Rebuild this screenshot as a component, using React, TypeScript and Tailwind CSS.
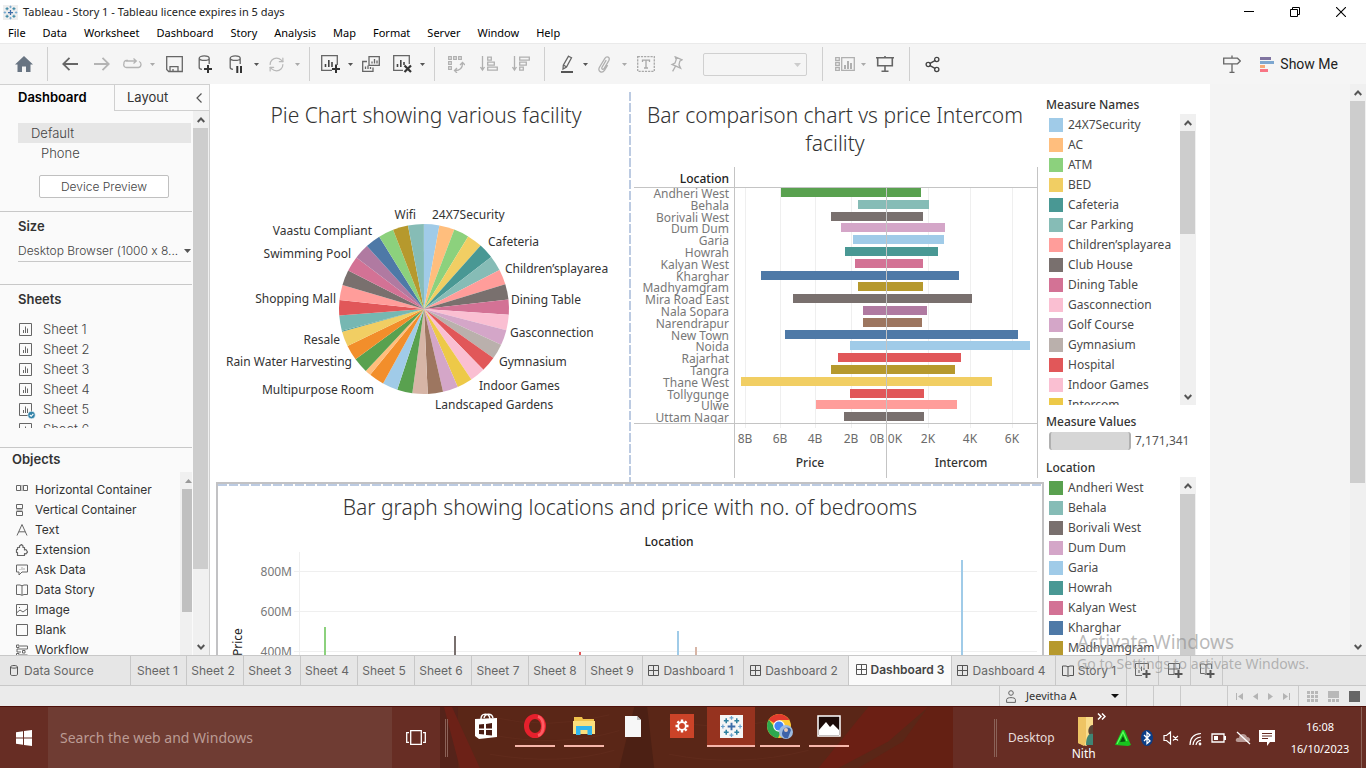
import React from "react";
import { RefreshCw, Share2 } from "lucide-react";

type Item = { name: string; color: string };

const measures: Item[] = [
  { name: "24X7Security", color: "#a0cbe8" },
  { name: "AC", color: "#ffbe7d" },
  { name: "ATM", color: "#8cd17d" },
  { name: "BED", color: "#f1ce63" },
  { name: "Cafeteria", color: "#499894" },
  { name: "Car Parking", color: "#86bcb6" },
  { name: "Children’splayarea", color: "#ff9d9a" },
  { name: "Club House", color: "#79706e" },
  { name: "Dining Table", color: "#d37295" },
  { name: "Gasconnection", color: "#fabfd2" },
  { name: "Golf Course", color: "#d4a6c8" },
  { name: "Gymnasium", color: "#bab0ac" },
  { name: "Hospital", color: "#e15759" },
  { name: "Indoor Games", color: "#fabfd2" },
  { name: "Intercom", color: "#edc948" },
];

type Loc = Item & { price: number; intercom: number };

/* price in billions, intercom in thousands */
const locations: Loc[] = [
  { name: "Andheri West", color: "#59a14f", price: 5.98, intercom: 1.65 },
  { name: "Behala", color: "#86bcb6", price: 1.62, intercom: 2.03 },
  { name: "Borivali West", color: "#79706e", price: 3.2, intercom: 1.75 },
  { name: "Dum Dum", color: "#d4a6c8", price: 2.63, intercom: 2.8 },
  { name: "Garia", color: "#a0cbe8", price: 1.95, intercom: 2.75 },
  { name: "Howrah", color: "#499894", price: 2.4, intercom: 2.47 },
  { name: "Kalyan West", color: "#d37295", price: 1.84, intercom: 1.75 },
  { name: "Kharghar", color: "#4e79a7", price: 7.12, intercom: 3.46 },
  { name: "Madhyamgram", color: "#b6992d", price: 1.67, intercom: 1.75 },
  { name: "Mira Road East", color: "#79706e", price: 5.35, intercom: 4.08 },
  { name: "Nala Sopara", color: "#b07aa1", price: 1.38, intercom: 1.94 },
  { name: "Narendrapur", color: "#9d7660", price: 1.38, intercom: 1.7 },
  { name: "New Town", color: "#4e79a7", price: 5.76, intercom: 6.27 },
  { name: "Noida", color: "#a0cbe8", price: 2.07, intercom: 6.84 },
  { name: "Rajarhat", color: "#e15759", price: 2.8, intercom: 3.56 },
  { name: "Tangra", color: "#b6992d", price: 3.15, intercom: 3.27 },
  { name: "Thane West", color: "#f1ce63", price: 8.25, intercom: 5.03 },
  { name: "Tollygunge", color: "#e15759", price: 2.07, intercom: 1.79 },
  { name: "Ulwe", color: "#ff9d9a", price: 4.0, intercom: 3.37 },
  { name: "Uttam Nagar", color: "#79706e", price: 2.46, intercom: 1.79 },
];

const slices: [string, number][] = [
  ["#a0cbe8", 10.44], ["#ffbe7d", 10.44], ["#8cd17d", 10.44], ["#f1ce63", 10.44],
  ["#499894", 10.44], ["#86bcb6", 10.44], ["#ff9d9a", 10.44], ["#79706e", 10.44],
  ["#d37295", 10.44], ["#fabfd2", 10.44], ["#d4a6c8", 10.44], ["#bab0ac", 10.44],
  ["#e15759", 10.44], ["#fabfd2", 10.44], ["#edc948", 10.44], ["#d4a6c8", 10.44],
  ["#9d7660", 10.44], ["#d7b5a6", 10.44], ["#59a14f", 10.44], ["#a0cbe8", 10.44],
  ["#f28e2b", 10.44], ["#ffbe7d", 4], ["#59a14f", 10.44], ["#f28e2b", 10.44],
  ["#f1ce63", 10.44], ["#499894", 0.6], ["#76b7b2", 10.44], ["#e15759", 10.44],
  ["#ff9d9a", 10.44], ["#79706e", 10.44], ["#d37295", 10.44], ["#b07aa1", 10.44],
  ["#4e79a7", 10.44], ["#8cd17d", 10.44], ["#b6992d", 10.44], ["#86bcb6", 10.8],
];

const pieLabels: [string, number, number, "start" | "end"][] = [
  ["24X7Security", 216, 127, "start"],
  ["Cafeteria", 272, 154, "start"],
  ["Children’splayarea", 289, 181, "start"],
  ["Dining Table", 295, 212, "start"],
  ["Gasconnection", 294, 245, "start"],
  ["Gymnasium", 283, 274, "start"],
  ["Indoor Games", 263, 298, "start"],
  ["Landscaped Gardens", 219, 317, "start"],
  ["Multipurpose Room", 158, 302, "end"],
  ["Rain Water Harvesting", 136, 274, "end"],
  ["Resale", 124, 252, "end"],
  ["Shopping Mall", 120, 211, "end"],
  ["Swimming Pool", 135, 166, "end"],
  ["Vaastu Compliant", 156, 143, "end"],
  ["Wifi", 200, 127, "end"],
];

function PieChart() {
  const cx = 208;
  const cy = 217;
  const r = 85;
  let a = 0;
  const point = (deg: number) => {
    const t = (deg * Math.PI) / 180;
    return `${(cx + r * Math.sin(t)).toFixed(2)} ${(cy - r * Math.cos(t)).toFixed(2)}`;
  };
  return (
    <svg viewBox="0 0 413 390" width="413" height="390" className="block font-['Noto_Sans',sans-serif] text-xs" role="img" aria-label="Pie chart">
      {slices.map(([color, deg], i) => {
        const start = a;
        a += deg;
        return <path key={i} fill={color} d={`M${cx} ${cy}L${point(start)}A${r} ${r} 0 0 1 ${point(Math.min(a, 360))}Z`} />;
      })}
      {pieLabels.map(([label, x, y, anchor]) => (
        <text key={label} x={x} y={y} textAnchor={anchor} fill="#333">
          {label}
        </text>
      ))}
    </svg>
  );
}

function CompareChart() {
  const zero = 252;
  return (
    <svg viewBox="0 0 410 316" width="410" height="316" className="block font-['Noto_Sans',sans-serif] text-xs" role="img" aria-label="Price and intercom by location">
      <g shapeRendering="crispEdges">
        {[111, 146, 181, 217, 294, 336, 378].map((x) => (
          <rect key={x} x={x} y={21} width={1} height={240} fill="#efefef" />
        ))}
        {locations.map((l, i) => {
          const y = 21 + Math.round(i * 11.8);
          const w = Math.round(l.price * 17.65) - 1;
          const v = Math.round(l.intercom * 21);
          return <rect key={l.name} x={zero - w} y={y} width={w + v} height={9} fill={l.color} />;
        })}
        <g fill="#c4c4c4">
          <rect x={0} y={20} width={404} height={1} />
          <rect x={0} y={256} width={404} height={1} />
          <rect x={100} y={0} width={1} height={311} />
          <rect x={403} y={0} width={1} height={311} />
          <rect x={zero} y={21} width={1} height={290} />
        </g>
      </g>
      <text x={95} y={16} textAnchor="end" fontWeight={500} fill="#222">Location</text>
      <svg x={0} y={21} width={100} height={235}>
        {locations.map((l, i) => (
          <text key={l.name} x={95} y={Math.round(i * 11.8) + 10} textAnchor="end" fill="#787878">
            {l.name}
          </text>
        ))}
      </svg>
      <g fill="#6b6b6b" textAnchor="middle">
        {([["8B", 111], ["6B", 146], ["4B", 181], ["2B", 217], ["0B", 243], ["0K", 261], ["2K", 294], ["4K", 336], ["6K", 378]] as [string, number][]).map(([t, x]) => (
          <text key={t} x={x} y={276}>{t}</text>
        ))}
      </g>
      <g fill="#333" fontWeight={500} textAnchor="middle">
        <text x={176} y={300}>Price</text>
        <text x={327} y={300}>Intercom</text>
      </g>
    </svg>
  );
}

function BedroomChart() {
  const bars: [number, number, string][] = [
    [106, 75, "#8cd17d"], [236, 84, "#79706e"], [361, 100, "#e15759"],
    [459, 79, "#a0cbe8"], [477, 95, "#d7b5a6"], [743, 8, "#a0cbe8"],
  ];
  return (
    <svg viewBox="0 0 824 180" width="824" height="180" className="block font-['Noto_Sans',sans-serif] text-xs" role="img" aria-label="Price by location and bedrooms">
      <g shapeRendering="crispEdges">
        {[19, 59, 99].map((y) => (
          <rect key={y} x={76} y={y} width={743} height={1} fill="#efefef" />
        ))}
        <rect x={81} y={0} width={1} height={180} fill="#efefef" />
        {bars.map(([x, y, c]) => (
          <rect key={x} x={x} y={y} width={2} height={180 - y} fill={c} />
        ))}
      </g>
      <g fill="#787878" textAnchor="end">
        <text x={74} y={24}>800M</text>
        <text x={74} y={64}>600M</text>
        <text x={74} y={104}>400M</text>
      </g>
      <text transform="translate(24 104) rotate(-90)" fill="#222">Price</text>
    </svg>
  );
}

function Chevron({ up }: { up?: boolean }) {
  return (
    <svg width="8" height="6" viewBox="0 0 8 6" aria-hidden="true">
      <path d={up ? "M0.7 5L4 1.5L7.3 5" : "M0.7 1L4 4.5L7.3 1"} fill="none" stroke="#555" strokeWidth="1.9" />
    </svg>
  );
}

function ScrollBar({ thumb, down = true }: { thumb: string; down?: boolean }) {
  return (
    <div className="flex w-4 shrink-0 flex-col items-stretch bg-[#f0f0f0]">
      <button aria-label="Scroll up" className="mr-px flex h-[17px] shrink-0 items-center justify-center">
        <Chevron up />
      </button>
      <div className={`mr-px bg-[#cdcdcd] ${thumb}`} />
      {down && (
        <button aria-label="Scroll down" className="mt-auto mr-px flex h-[17px] shrink-0 items-center justify-center">
          <Chevron />
        </button>
      )}
    </div>
  );
}

function Legend({ title, items, className, thumb, down }: { title: string; items: Item[]; className: string; thumb: string; down?: boolean }) {
  return (
    <section className={`flex flex-col ${className}`}>
      <h3 className="h-[18px] shrink-0 text-xs leading-[18px] font-medium text-[#333]">{title}</h3>
      <div className="flex min-h-0 flex-1 overflow-hidden">
        <ul className="flex-1 overflow-hidden pt-px pl-[3px]">
          {items.map((m) => (
            <li key={m.name} className="flex h-5 items-center gap-[5px] text-xs whitespace-nowrap text-[#4a4a4a]">
              <span className="size-3.5 shrink-0" style={{ backgroundColor: m.color }} />
              {m.name}
            </li>
          ))}
        </ul>
        <ScrollBar thumb={thumb} down={down} />
      </div>
    </section>
  );
}

function Tool({ label, className, children }: { label: string; className: string; children: React.ReactNode }) {
  return (
    <button aria-label={label} className={`flex h-8 w-6 shrink-0 items-center justify-center text-[#666] ${className}`}>
      {children}
    </button>
  );
}

function Caret({ className, dim }: { className: string; dim?: boolean }) {
  return (
    <button aria-label="More options" className={`flex h-8 w-3 shrink-0 items-center justify-center ${className}`}>
      <svg width="5" height="3" viewBox="0 0 5 3"><path d="M0 0H5L2.5 3Z" fill={dim ? "#aaa" : "#555"} /></svg>
    </button>
  );
}

function Sep({ className }: { className: string }) {
  return <span className={`h-[34px] w-px shrink-0 bg-[#cfcfcf] ${className}`} />;
}

const line = { fill: "none", stroke: "currentColor", strokeWidth: 1.3 } as const;

function Toolbar() {
  return (
    <div className="flex h-[41px] shrink-0 items-center border-t border-[#eaeaea] bg-[#f5f5f5]">
      <Tool label="Home" className="ml-3">
        <svg width="18" height="16" viewBox="0 0 18 16"><path d="M9 0L18 8.5H15.5V16H11V10.5H7V16H2.5V8.5H0Z" fill="#687482" /></svg>
      </Tool>
      <Sep className="ml-[11px]" />
      <Tool label="Undo" className="ml-[10px]"><svg width="16" height="14" viewBox="0 0 16 14"><path d="M16 7H1M7.5 0.8L1.2 7L7.5 13.2" {...line} strokeWidth="1.8" /></svg></Tool>
      <Tool label="Redo" className="ml-2"><svg width="16" height="14" viewBox="0 0 16 14" className="text-[#b4b4b4]"><path d="M0 7H15M8.5 0.8L14.8 7L8.5 13.2" {...line} strokeWidth="1.8" /></svg></Tool>
      <Tool label="Replay animation" className="ml-1.5">
        <svg width="19" height="12" viewBox="0 0 19 12" className="text-[#b4b4b4]"><path d="M5 2.5H3.5A2.5 2.5 0 0 0 1 5.5A2.8 2.8 0 0 0 3.8 9.5H15.5A3 3 0 0 0 18 6.5A3 3 0 0 0 16 3.5M3 3H13M10.5 0.5L13.3 3L10.5 5.5" {...line} /></svg>
      </Tool>
      <Caret className="ml-0.5" dim />
      <Tool label="Save" className="ml-1">
        <svg width="17" height="17" viewBox="0 0 17 17"><path d="M0.7 0.7H16.3V15.5H2.7L0.7 13.5ZM4 15V10.7H12V15M7 15V13" {...line} /></svg>
      </Tool>
      <Tool label="New data source" className="ml-[7px]">
        <svg width="16" height="18" viewBox="0 0 16 18"><path d="M2.2 3.2V12.5C2.2 13.6 3 14.2 5 14.4M12.2 3.2V9M2.2 3.2C2.2 0.2 12.2 0.2 12.2 3.2C12.2 6.2 2.2 6.2 2.2 3.2" {...line} /><path d="M11 10V18M7 14H15" stroke="#333" strokeWidth="2" /></svg>
      </Tool>
      <Tool label="Pause auto updates" className="ml-[7px]">
        <svg width="16" height="18" viewBox="0 0 16 18"><path d="M2.2 3.2V12.5C2.2 13.6 3 14.2 5 14.4M12.2 3.2V9M2.2 3.2C2.2 0.2 12.2 0.2 12.2 3.2C12.2 6.2 2.2 6.2 2.2 3.2" {...line} /><path d="M9.3 11V18M13 11V18" stroke="#333" strokeWidth="2" /></svg>
      </Tool>
      <Caret className="ml-0.5" />
      <Tool label="Run update" className="ml-0.5"><RefreshCw className="size-[17px] text-[#b8b8b8]" strokeWidth={1.7} /></Tool>
      <Caret className="ml-[3px]" dim />
      <Sep className="ml-1.5" />
      <Tool label="New worksheet" className="ml-2">
        <svg width="19" height="18" viewBox="0 0 19 18"><path d="M16.3 10V0.7H0.7V15.3H11" {...line} /><path d="M4.5 12V9M7.8 12V5M11 12V7" stroke="#444" strokeWidth="1.6" /><path d="M15 9.5V18M11 14H19" stroke="#333" strokeWidth="2" /></svg>
      </Tool>
      <Caret className="ml-0.5" />
      <Tool label="Duplicate" className="ml-[3px]">
        <svg width="18" height="16" viewBox="0 0 18 16"><path d="M7 0.7H17.3V9.3H7ZM5 5.5H0.7V15.3H11V11.5M10 7.5V5.5M12.5 7.5V3M15 7.5V4.5M3.5 13V10.5M6 13V9.5M8.5 13V11" {...line} /></svg>
      </Tool>
      <Tool label="Clear sheet" className="ml-[7px]">
        <svg width="19" height="18" viewBox="0 0 19 18"><path d="M16.3 9V0.7H0.7V15.3H10" {...line} /><path d="M4.5 12V9M7.8 12V5M11 10V7" stroke="#444" strokeWidth="1.6" /><path d="M11.5 10.5L18 17M18 10.5L11.5 17" stroke="#333" strokeWidth="2.2" /></svg>
      </Tool>
      <Caret className="ml-0.5" />
      <Sep className="ml-1.5" />
      <Tool label="Swap rows and columns" className="ml-[9px]">
        <svg width="17" height="17" viewBox="0 0 17 17" className="text-[#b0b0b0]"><path d="M0.7 0.7H3.3V3.3H0.7ZM5.7 0.7H8.3V3.3H5.7ZM10.7 0.7H13.3V3.3H10.7ZM0.7 5.7H3.3V8.3H0.7ZM0.7 10.7H3.3V13.3H0.7ZM7 14.5C12 14.5 14.5 12 14.5 7.5M12 9L14.5 6.5L17 9M9 12L6.5 14.5L9 17" {...line} /></svg>
      </Tool>
      <Tool label="Sort ascending" className="ml-[9px]">
        <svg width="18" height="16" viewBox="0 0 18 16" className="text-[#b0b0b0]"><path d="M2.5 0V13M0.5 11L2.5 14L4.5 11M7.7 1.2H11.3V4.2H7.7ZM7.7 6.2H14.3V9.2H7.7ZM7.7 11.2H17.3V14.2H7.7Z" {...line} /></svg>
      </Tool>
      <Tool label="Sort descending" className="ml-2">
        <svg width="18" height="16" viewBox="0 0 18 16" className="text-[#b0b0b0]"><path d="M2.5 0V13M0.5 11L2.5 14L4.5 11M7.7 1.2H17.3V4.2H7.7ZM7.7 6.2H14.3V9.2H7.7ZM7.7 11.2H11.3V14.2H7.7Z" {...line} /></svg>
      </Tool>
      <Sep className="ml-[11px]" />
      <Tool label="Highlight" className="ml-2.5">
        <svg width="14" height="18" viewBox="0 0 14 18"><path d="M8.5 1.2L11.5 2.8L6.5 12L3 14L3.3 10.2ZM3.5 10L6.5 12" {...line} /><path d="M1 17H13" stroke="#555" strokeWidth="2" /></svg>
      </Tool>
      <Caret className="" />
      <Tool label="Group members" className="ml-px">
        <svg width="14" height="17" viewBox="0 0 14 17" className="text-[#b0b0b0]"><path d="M9.2 4.2L5 11.2C4 13.2 6.2 14 7.2 12.3L11.8 4.6C13.4 1.4 9.8 -0.6 7.9 2.4L2.6 11C0 15.4 5 18 7.6 14.2L10.6 9.2" {...line} /></svg>
      </Tool>
      <Caret className="ml-0.5" dim />
      <Tool label="Show mark labels" className="ml-1">
        <svg width="18" height="16" viewBox="0 0 18 16" className="text-[#a8a8a8]"><rect x="0.7" y="0.7" width="16.6" height="14.6" {...line} strokeDasharray="2.2 1" /><path d="M5.5 6V4.2H12.5V6M9 4.2V12M7 12H11" {...line} /></svg>
      </Tool>
      <Tool label="Fix axes" className="ml-1.5">
        <svg width="13" height="16" viewBox="0 0 13 16" className="text-[#b0b0b0]"><path d="M5.2 0.8L12.2 3.8L9.8 5.2L9 8.8L10.6 12.2L2 8.4L5 7L6.2 3.6ZM5.5 10.2L2.6 15.4" {...line} /></svg>
      </Tool>
      <div className="relative ml-[15px] h-[23px] w-[104px] shrink-0">
        <select aria-label="Fit" disabled className="h-full w-full appearance-none rounded-[2px] border border-[#d0d0d0] bg-[#f5f5f5]" />
        <svg width="7" height="4" viewBox="0 0 7 4" className="pointer-events-none absolute top-2.5 right-1.5"><path d="M0 0H7L3.5 4Z" fill="#ccc" /></svg>
      </div>
      <Sep className="ml-[15px]" />
      <Tool label="Show cards" className="ml-2.5">
        <svg width="20" height="14" viewBox="0 0 20 14" className="text-[#b0b0b0]"><path d="M0.7 0.7H4.3V3.3H0.7ZM0.7 5.5H4.3V8.3H0.7ZM0.7 10.5H4.3V13.3H0.7ZM6.7 0.7H19.3V13.3H6.7Z" {...line} /><path d="M10 12V8M13 12V4M16 12V6" stroke="currentColor" strokeWidth="2" /></svg>
      </Tool>
      <Caret className="" dim />
      <Tool label="Presentation mode" className="ml-1">
        <svg width="18" height="16" viewBox="0 0 18 16"><path d="M0 1.7H18M9 0V1M1.7 2V9.8H16.3V2M9 10V15M5.5 15.2H12.5" {...line} strokeWidth="1.6" /></svg>
      </Tool>
      <Sep className="ml-3" />
      <Tool label="Share" className="ml-2.5"><Share2 className="size-[17px] text-[#444]" strokeWidth={1.9} /></Tool>
      <Tool label="Data guide" className="ml-auto">
        <svg width="18" height="18" viewBox="0 0 18 18"><path d="M0.7 3.2H14.5L17.3 6L14.5 8.8H0.7ZM9 0.5V3M9 9V17M6.5 17.3H11.5" {...line} /></svg>
      </Tool>
      <button className="mr-[28px] ml-4 flex items-center gap-1.5 font-['Roboto',sans-serif] text-sm text-[#222]">
        <svg width="14" height="15" viewBox="0 0 14 15"><path d="M0 0H11V3H0Z" fill="#8074a0" /><path d="M0 4H14V7H0Z" fill="#7da7d0" /><path d="M0 8H5V11H0Z" fill="#f5a978" /><path d="M0 12H8V15H0Z" fill="#f87585" /></svg>
        Show Me
      </button>
    </div>
  );
}

function SheetIcon({ checked }: { checked?: boolean }) {
  return (
    <svg width="17" height="17" viewBox="0 0 17 17" className="shrink-0">
      <path d="M0.5 1.5H12.5V13.5H0.5ZM4.5 11V8M6.5 11V4.5M8.5 11V6.5" fill="none" stroke="#666" />
      {checked && (
        <g>
          <circle cx="12.5" cy="13" r="3.8" fill="#3182a8" stroke="#fff" strokeWidth="0.6" />
          <path d="M10.8 13L12.2 14.3L14.3 11.8" fill="none" stroke="#fff" strokeWidth="1.1" />
        </g>
      )}
    </svg>
  );
}

const objectIcons: { name: string; icon: React.ReactNode }[] = [
  { name: "Horizontal Container", icon: <><path d="M4.5 1.5H7.5V6.5H4.5Z" fill="#ccc" stroke="#bbb" /><path d="M0.5 1.5H4.5V6.5H0.5ZM7.5 1.5H11.5V6.5H7.5Z" /></> },
  { name: "Vertical Container", icon: <><path d="M1 5H6V7H1Z" fill="#bbb" stroke="#bbb" /><path d="M0.5 0.5H6.5V4.5H0.5ZM0.5 7.5H6.5V11.5H0.5Z" /></> },
  { name: "Text", icon: <path d="M1 11.5L6 0.5L11 11.5M2.8 7.8H9.2" /> },
  { name: "Extension", icon: <path d="M3.500 3.500H1.500V5.500H0.500V8.500H1.500V11.500H8.500V9.500L10 9.800L11.500 8L10 5.500L8.500 6V3.500H7V2L5.500 0.500L3.500 2Z" strokeWidth="1.200" strokeLinejoin="round" /> },
  { name: "Ask Data", icon: <><path d="M0.5 1H11.5V8H6L3 11V8H0.5Z" /><path d="M4 6V5M6 6V3M8 6V4" stroke="#aaa" /></> },
  { name: "Data Story", icon: <path d="M6 1.8L4 1H0.5V10.5H4L6 11.3L8 10.5H11.5V1H8ZM6 1.8V11" /> },
  { name: "Image", icon: <path d="M0.5 0.5H11.5V11.5H0.5ZM1 8.5L4 6L7 8L11 5M3.5 3V4" /> },
  { name: "Blank", icon: <path d="M0.5 0.5H11.5V11.5H0.5Z" /> },
  { name: "Workflow", icon: <path d="M0.5 1H3V3.5H0.5ZM4 2H11.5V5H1V8H5M6.5 6.5H9V9H6.5ZM0.5 9.5H3V12H0.5ZM4 11H11.5" /> },
];

function Sidebar() {
  return (
    <aside className="flex w-[210px] shrink-0 flex-col border-r border-[#d0d0d0] bg-[#fafafa] font-['Inter',sans-serif] text-[#444] [font-feature-settings:'calt'_0]">
      <div className="flex h-[27px] shrink-0 border-t border-[#d0d0d0]" role="tablist">
        <button role="tab" aria-selected="true" className="flex w-[114px] items-center pl-[18px] text-[13px] font-semibold text-black">Dashboard</button>
        <div className="flex flex-1 items-center justify-between border-b border-l border-[#d0d0d0] pr-[7px] pl-3">
          <button role="tab" aria-selected="false" className="text-[13px] text-[#333]">Layout</button>
          <button aria-label="Collapse pane"><svg width="6" height="10" viewBox="0 0 6 10"><path d="M5.5 0.5L1 5L5.5 9.5" fill="none" stroke="#555" strokeWidth="1.2" /></svg></button>
        </div>
      </div>
      <div className="flex min-h-0 flex-1">
        <div className="flex min-w-0 flex-1 flex-col pt-3">
          <div className="mr-px ml-[18px] h-5 bg-[#e6e6e6] pl-[13px] text-[13px] leading-5 font-light">Default</div>
          <div className="ml-[41px] h-5 text-[13px] leading-5 font-light">Phone</div>
          <button className="mt-3 ml-[39px] h-[23px] w-[130px] shrink-0 rounded-[2px] border border-[#c0c0c0] bg-white text-xs font-light">Device Preview</button>
          <div className="mt-[13px] border-t border-[#c8c8c8] px-[18px] pt-[5px]">
            <h2 className="text-[13px] leading-[18px] font-semibold text-[#333]">Size</h2>
          </div>
          <button aria-label="Dashboard size" className="mt-1.5 mr-px ml-[18px] flex h-[21px] shrink-0 items-center justify-between border-b border-[#c8c8c8] text-xs font-light whitespace-nowrap">
            <span>Desktop Browser (1000 x 8...</span>
            <svg width="7" height="4" viewBox="0 0 7 4"><path d="M0 0H7L3.5 4Z" fill="#555" /></svg>
          </button>
          <div className="mt-[22px] border-t border-[#c8c8c8] px-[18px] pt-[5px]">
            <h2 className="text-[13px] leading-[18px] font-semibold text-[#333]">Sheets</h2>
          </div>
          <ul className="mt-3 h-[108px] shrink-0 overflow-hidden pl-[19px]">
            {[1, 2, 3, 4, 5, 6].map((n) => (
              <li key={n} className="flex h-5 items-center gap-[7px] text-[13px] font-light">
                <SheetIcon checked={n === 5} />
                Sheet {n}
              </li>
            ))}
          </ul>
          <div className="mt-[19px] border-t border-[#c8c8c8] pt-[2px] pl-3">
            <h2 className="text-[13px] leading-[18px] font-semibold text-[#333]">Objects</h2>
          </div>
          <div className="mt-1 flex min-h-0 flex-1 overflow-hidden">
            <ul className="flex-1 pt-2 pl-4">
              {objectIcons.map((o) => (
                <li key={o.name} className="flex h-5 items-center gap-[7px] text-xs whitespace-nowrap text-[#333]">
                  <svg width="12" height="12" viewBox="0 0 12 12" fill="none" stroke="#666" className="shrink-0 overflow-visible">{o.icon}</svg>
                  {o.name}
                </li>
              ))}
            </ul>
            <div className="w-3 shrink-0 bg-[#f0f0f0]">
              <div className="flex h-[17px] items-center justify-center pl-1"><svg width="7" height="4" viewBox="0 0 7 4"><path d="M0 4H7L3.5 0Z" fill="#999" /></svg></div>
              <div className="ml-0.5 h-[123px] bg-[#c0c0c0]" />
            </div>
          </div>
        </div>
        <div className="ml-px flex">
          <ScrollBar thumb="h-[441px]" />
        </div>
      </div>
    </aside>
  );
}

function Canvas() {
  return (
    <main className="flex min-w-0 flex-1 bg-[#f4f4f4] font-['Noto_Sans',sans-serif]">
      <div className="min-w-0 flex-1 overflow-hidden">
        <div className="flex h-full w-[1000px] bg-white">
          <div className="flex w-[834px] flex-col pt-2 pl-1.5">
            <div className="flex h-[390px] shrink-0">
              <section className="relative w-[413px]">
                <h2 className="absolute inset-x-0 top-[9px] pl-[7px] text-center text-[21px] leading-7 font-light text-[#333]">Pie Chart showing various facility</h2>
                <PieChart />
              </section>
              <svg width="2" height="390" className="shrink-0"><path d="M1 0V390" stroke="#bccbe2" strokeWidth="2" strokeDasharray="9 2" /></svg>
              <section className="w-[413px] pt-[9px] pl-[3px]">
                <h2 className="pr-2 text-center text-[21px] leading-7 font-light text-[#333]">Bar comparison chart vs price Intercom facility</h2>
                <div className="mt-2.5"><CompareChart /></div>
              </section>
            </div>
            <section className="min-h-0 flex-1 border-2 border-b-0 border-[#c2c2c4]">
              <svg height="2" className="block w-full"><path d="M0 1H824" stroke="#bccbe2" strokeWidth="2" strokeDasharray="9 2" /></svg>
              <h2 className="mt-[7px] text-center text-[21px] leading-7 font-light text-[#333]">Bar graph showing locations and price with no. of bedrooms</h2>
              <p className="mt-3 pl-[78px] text-center text-xs leading-[18px] font-medium text-[#222]">Location</p>
              <div className="mt-px"><BedroomChart /></div>
            </section>
          </div>
          <div className="ml-[2px] flex w-[150px] flex-col pt-3">
            <Legend title="Measure Names" items={measures} className="h-[309px] shrink-0" thumb="h-[103px]" />
            <section className="mt-2 h-[46px] shrink-0">
              <h3 className="text-xs leading-[18px] font-medium text-[#333]">Measure Values</h3>
              <div className="flex items-center gap-1 pt-px pl-[3px]">
                <div className="h-[18px] w-[82px] rounded-[3px] border-x-2 border-[#b0b0b0] bg-[#d6d6d6]" />
                <span className="text-xs leading-[18px] text-[#555]">7,171,341</span>
              </div>
            </section>
            <Legend title="Location" items={locations.slice(0, 10)} className="min-h-0 flex-1" thumb="flex-1" down={false} />
          </div>
        </div>
      </div>
      <ScrollBar thumb="h-[382px]" />
    </main>
  );
}

function GridIcon() {
  return <svg width="11" height="11" viewBox="0 0 11 11" className="shrink-0"><path d="M0.5 0.5H10.5V10.5H0.5ZM5.5 0.5V10.5M0.5 5.5H10.5" fill="none" stroke="#555" /></svg>;
}
function BookIcon() {
  return <svg width="12" height="12" viewBox="0 0 12 12" className="shrink-0"><path d="M6 1.8L4 1H0.5V10.5H4L6 11.3L8 10.5H11.5V1H8ZM6 1.8V11" fill="none" stroke="#555" /></svg>;
}

function AddTab({ label, children }: { label: string; children: React.ReactNode }) {
  return (
    <button aria-label={label} className="flex w-8 items-center justify-center border-r border-[#c8c8c8]">
      <svg width="16" height="15" viewBox="0 0 16 15" fill="none" stroke="#666">{children}<path d="M11.5 7V15M7.5 11H15.5" stroke="#555" strokeWidth="2" /></svg>
    </button>
  );
}

function SheetTabs() {
  return (
    <nav className="flex h-[31px] shrink-0 border-y border-[#c8c8c8] bg-[#e6e6e6] font-['Inter',sans-serif] text-xs whitespace-nowrap text-[#666]">
      <button className="flex w-[131px] items-center gap-1.5 border-r border-[#c8c8c8] pl-2.5">
        <svg width="8" height="11" viewBox="0 0 8 11"><path d="M0.5 2V9.5C0.5 11 7.5 11 7.5 9.5V2C7.5 0 0.5 0 0.5 2C0.5 3.5 7.5 3.5 7.5 2" fill="none" stroke="#555" /></svg>
        Data Source
      </button>
      <button className="w-14 border-r border-[#c8c8c8] pr-0.5">Sheet 1</button>
      {[2, 3, 4, 5, 6, 7, 8, 9].map((n) => (
        <button key={n} className="w-[57px] border-r border-[#c8c8c8] pr-1">Sheet {n}</button>
      ))}
      <button className="flex w-[101px] items-center justify-center gap-1 border-r border-[#c8c8c8] pr-1"><GridIcon />Dashboard 1</button>
      <button className="flex w-[105px] items-center justify-center gap-1 border-r border-[#c8c8c8] pr-1"><GridIcon />Dashboard 2</button>
      <button aria-current="page" className="flex w-[103px] items-center justify-center gap-1 border-r border-[#c8c8c8] bg-[#fafafa] pb-0.5 font-semibold text-[#444]"><GridIcon />Dashboard 3</button>
      <button className="flex w-[104px] items-center justify-center gap-1 border-r border-[#c8c8c8] pr-1"><GridIcon />Dashboard 4</button>
      <button className="flex w-[71px] items-center justify-center gap-1 border-r border-[#c8c8c8] pr-1"><BookIcon />Story 1</button>
      <AddTab label="New worksheet"><path d="M13.5 6V0.5H0.5V12.5H7M4 10V7M6.5 8V3.5M9 7V5" /></AddTab>
      <AddTab label="New dashboard"><path d="M12.5 6V0.5H1.5V11.5H7M7 0.5V11.5M1.5 6H12.5" /></AddTab>
      <AddTab label="New story"><path d="M12.5 6V1H9L7 2L5 1H1.5V10.5H5L7 11.5V2" /></AddTab>
    </nav>
  );
}

function StatusBar() {
  return (
    <div className="flex h-5 shrink-0 justify-end bg-[#ebebeb] font-['Noto_Sans',sans-serif] text-[11px] text-[#333]">
      <button className="flex w-[128px] items-center border-x border-[#cacaca] pr-[7px] pl-1.5">
        <svg width="10" height="13" viewBox="0 0 10 13" fill="none" stroke="#666"><circle cx="5" cy="3" r="2.3" /><path d="M0.6 12.4V9.5C0.6 7 9.4 7 9.4 9.5V12.4Z" /></svg>
        <span className="ml-2.5">Jeevitha A</span>
        <svg width="8" height="4" viewBox="0 0 8 4" className="ml-auto"><path d="M0 0H8L4 4Z" fill="#111" /></svg>
      </button>
      <span className="w-[27px] border-r border-[#cacaca]" />
      <span className="w-[27px] border-r border-[#cacaca]" />
      <span className="w-[47px] border-r border-[#cacaca]" />
      <div className="flex w-[71px] items-center justify-between border-r border-[#cacaca] px-2">
        <button aria-label="First"><svg width="7" height="7" viewBox="0 0 7 7"><path d="M0 0H1V7H0ZM7 0V7L2 3.5Z" fill="#b4b4b4" /></svg></button>
        <button aria-label="Previous"><svg width="5" height="7" viewBox="0 0 5 7"><path d="M5 0V7L0 3.5Z" fill="#b4b4b4" /></svg></button>
        <button aria-label="Next"><svg width="5" height="7" viewBox="0 0 5 7"><path d="M0 0V7L5 3.5Z" fill="#b4b4b4" /></svg></button>
        <button aria-label="Last"><svg width="7" height="7" viewBox="0 0 7 7"><path d="M6 0H7V7H6ZM0 0V7L5 3.5Z" fill="#b4b4b4" /></svg></button>
      </div>
      <div className="flex w-[67px] items-center justify-between pr-1.5 pl-2">
        <button aria-label="Sheet sorter"><svg width="11" height="11" viewBox="0 0 11 11"><path d="M0 0H3V3H0ZM4 0H7V3H4ZM8 0H11V3H8ZM0 4H3V7H0ZM4 4H7V7H4ZM8 4H11V7H8ZM0 8H3V11H0ZM4 8H7V11H4ZM8 8H11V11H8Z" fill="#b8b8b8" /></svg></button>
        <button aria-label="Filmstrip"><svg width="11" height="11" viewBox="0 0 11 11"><path d="M0 0H11V7H0ZM0 8H3V11H0ZM4 8H7V11H4ZM8 8H11V11H8Z" fill="#b8b8b8" /></svg></button>
        <button aria-label="Tabs"><svg width="11" height="11" viewBox="0 0 11 11"><path d="M0 0H11V11H0Z" fill="#666" /></svg></button>
      </div>
    </div>
  );
}

function TableauMark() {
  return (
    <g fill="none" strokeWidth="1.6">
      <path d="M12 8V16M8 12H16" stroke="#3c6ca8" strokeWidth="2" />
      <path d="M6.5 3.5V8.5M4 6H9M17.5 3.5V8.5M15 6H20M6.5 15.5V20.5M4 18H9M17.5 15.5V20.5M15 18H20" stroke="#2d7f9e" />
      <path d="M12 1V5M10 3H14M12 19V23M10 21H14M3 10V14M1 12H5M21 10V14M19 12H23" stroke="#6aa2cc" strokeWidth="1.3" />
    </g>
  );
}

function TaskButton({ label, className, children }: { label: string; className?: string; children: React.ReactNode }) {
  return (
    <button aria-label={label} className={`flex h-10 w-10 shrink-0 items-center justify-center border-b-2 ${className ?? "border-transparent"}`}>
      {children}
    </button>
  );
}

function Taskbar() {
  return (
    <footer className="flex h-[62px] shrink-0 overflow-hidden border-t border-[#4e110b] bg-[#672d24] font-['Noto_Sans',sans-serif] text-white">
      <button aria-label="Start" className="flex w-12 shrink-0 items-center justify-center">
        <svg width="16" height="16" viewBox="0 0 16 16"><path d="M0 2.3L7 1.2V7.5H0ZM8 1L16 0V7.5H8ZM0 8.5H7V14.8L0 13.8ZM8 8.5H16V16L8 15Z" fill="#fff" /></svg>
      </button>
      <input aria-label="Search" placeholder="Search the web and Windows" className="w-[344px] shrink-0 bg-[#6f3c33] pl-3 text-sm text-white placeholder:text-[#bb9b94]" />
      <button aria-label="Task view" className="flex w-12 shrink-0 items-center justify-center">
        <svg width="20" height="15" viewBox="0 0 20 15" fill="none" stroke="#fff" strokeWidth="1.3"><path d="M4.7 0.7H15.3V14.3H4.7ZM3 2.7H0.7V12.3H3M17 2.7H19.3V12.3H17" /></svg>
      </button>
      <div className="relative flex min-w-0 flex-1 overflow-hidden bg-[#5a2617]">
        <svg className="absolute inset-0 h-full w-full" viewBox="0 0 515 62" preserveAspectRatio="none" aria-hidden="true">
          <path d="M0 0H18V62H0Z" fill="#55231a" />
          <path d="M4 0H12L40 62H20Z" fill="#6c2117" />
          <path d="M195 0H208L215 62H180Z" fill="#4c2014" />
          <path d="M430 0H490L450 35L400 62H380Z" fill="#6b1f14" />
          <path d="M490 0H515V62H420L465 35Z" fill="#642013" />
          <path d="M50 10Q110 24 170 8M50 28Q120 42 180 24M50 48Q120 60 175 44M230 12Q280 28 350 10M230 48Q300 62 370 44" stroke="#602a1b" fill="none" />
        </svg>
        <div className="relative flex pl-[5px]">
          <span className="mt-3 h-[38px] w-[3px] shrink-0 border-x border-[#8b6258]" />
          <div className="flex items-start gap-[9px] pl-[18px]">
            <TaskButton label="Store">
              <svg width="22" height="26" viewBox="0 0 22 26"><path d="M0 6L22 5V24L4 26L0 23Z" fill="#fff" /><path d="M6 6C6 0 14 -1 15 6M9 5C10 0 17 0 18 5" fill="none" stroke="#fff" strokeWidth="1.4" /><path d="M4 11.5L9 11V15.5H4ZM11 11L17 10V15.5H11ZM4 17H9V21.5L4 21ZM11 17H17V22.5L11 22Z" fill="#4a1d14" /></svg>
            </TaskButton>
            <TaskButton label="Opera" className="border-[#f7b6aa]">
              <svg width="24" height="24" viewBox="0 0 24 24"><ellipse cx="12" cy="12" rx="8.5" ry="9.5" fill="none" stroke="#e6202c" strokeWidth="5" /><path d="M15 2.5C22 4 22 20 15 21.5" fill="none" stroke="#ff5b62" strokeWidth="3" /></svg>
            </TaskButton>
            <TaskButton label="File Explorer" className="border-[#f7b6aa]">
              <svg width="22" height="20" viewBox="0 0 22 20"><path d="M1 1H9L10 3H21V17H1Z" fill="#f0c24c" /><path d="M0 5H22V18H0Z" fill="#fbdf7d" /><path d="M3 10H19V19H14.5V14H7.5V19H3Z" fill="#31b5ee" /></svg>
            </TaskButton>
            <TaskButton label="Document">
              <svg width="16" height="21" viewBox="0 0 16 21"><path d="M0 0H12L16 4V21H0Z" fill="#f7f7f7" /><path d="M12 0V4H16Z" fill="#bbb" /></svg>
            </TaskButton>
            <TaskButton label="Settings">
              <svg width="24" height="24" viewBox="0 0 24 24"><path d="M0 0H24V24H0Z" fill="#cb4328" /><circle cx="12" cy="12" r="3.8" fill="none" stroke="#fff" strokeWidth="1.8" /><path d="M12 8V5.500M12 16V18.500M8 12H5.500M16 12H18.500M9.200 9.200L7.400 7.400M14.800 9.200L16.600 7.400M9.200 14.800L7.400 16.600M14.800 14.800L16.600 16.600" stroke="#fff" strokeWidth="2.400" /></svg>
            </TaskButton>
          </div>
          <button aria-label="Tableau" className="ml-[5px] flex h-10 w-12 shrink-0 items-center justify-center border-b-2 border-[#f7b6aa] bg-[#96331f]">
            <svg width="23" height="23" viewBox="0 0 24 24"><path d="M0 0H24V24H0Z" fill="#f5f5f5" /><TableauMark /></svg>
          </button>
          <div className="flex gap-[9px] pl-[5px]">
            <TaskButton label="Chrome" className="border-[#f7b6aa]">
              <svg width="27" height="26" viewBox="0 0 27 26"><circle cx="12" cy="13" r="12" fill="#fcc934" /><path d="M12 13L1.8 6.8A12 12 0 0 1 22.4 7H12Z" fill="#e33b2e" /><path d="M1.8 6.8A12 12 0 0 0 11 25L15 17L9 16Z" fill="#2da94f" /><circle cx="12" cy="13" r="5.8" fill="#fff" /><circle cx="12" cy="13" r="4.6" fill="#4285f4" /><circle cx="19" cy="19" r="7" fill="#9dbbe0" /><path d="M15 20C16 14 22 13 24 17L21 25C18 26 15 24 15 20" fill="#3d62a8" /><circle cx="19" cy="17" r="2" fill="#e8c9b6" /></svg>
            </TaskButton>
            <TaskButton label="Photos" className="border-[#f7b6aa]">
              <svg width="24" height="22" viewBox="0 0 24 22"><path d="M1 1H23V21H1Z" fill="#1b0b08" stroke="#fff" strokeWidth="1.5" /><path d="M2 20V15L9 7L13 12L16 9L22 15V20Z" fill="#fff" /></svg>
            </TaskButton>
          </div>
        </div>
      </div>
      <div className="flex w-[413px] shrink-0">
        <span className="mt-3 ml-[41px] h-[38px] w-[3px] shrink-0 border-x border-[#8b6258]" />
        <span className="ml-[11px] self-center text-xs text-[#e8dcda]">Desktop</span>
        <div className="ml-4 flex w-[26px] flex-col items-center pt-2.5">
          <svg width="15" height="29" viewBox="0 0 15 29" className="ml-1 shrink-0"><path d="M0 0H15V24L8 29L0 26Z" fill="#f9dc8c" /><path d="M0 0H8V24L6 29L0 26Z" fill="#eec464" /><path d="M15 8C10 8 9 16 12 18H15Z" fill="#5b4538" /><path d="M8 28C8 18 12 16 15 17V28Z" fill="#3f8574" /></svg>
          <span className="text-xs leading-4">Nith</span>
        </div>
        <svg width="9" height="7" viewBox="0 0 9 7" className="mt-1.5 shrink-0"><path d="M1 0.5L4 3.5L1 6.5M5 0.5L8 3.5L5 6.5" fill="none" stroke="#fff" strokeWidth="1.5" /></svg>
        <div className="ml-[9px] flex items-center gap-2">
          <svg width="16" height="16" viewBox="0 0 16 16"><path d="M7 0H9.500L16 15L13 16L0 15Z" fill="#18c41e" /><path d="M8 6L10.500 11.500L5 12Z" fill="#0b4f10" /><path d="M2 14L8 2L12 11" fill="none" stroke="#5dff60" strokeWidth="1.200" /></svg>
          <svg width="16" height="16" viewBox="0 0 16 16"><ellipse cx="8" cy="8" rx="6" ry="8" fill="#0b3d86" /><path d="M5 5L11 11L8 13.5V2.5L11 5L5 11" fill="none" stroke="#fff" strokeWidth="1.3" /></svg>
          <svg width="16" height="16" viewBox="0 0 16 16" fill="none" stroke="#fff" strokeWidth="1.2"><path d="M1 5.5H3.5L7.5 2V14L3.5 10.5H1ZM10 6L15 10.5M15 6L10 10.5" /></svg>
          <svg width="16" height="16" viewBox="0 0 16 16" fill="none" stroke="#fff" strokeWidth="1.2"><path d="M3 15C3 8 7 4 14 3.5M6 15C6.500 10 9 7.500 14 7M9 15C9.500 12 11 10.500 14 10.300" /><circle cx="13" cy="14" r="0.8" /></svg>
          <svg width="16" height="16" viewBox="0 0 16 16"><path d="M1 4H13V12H1Z" fill="none" stroke="#fff" strokeWidth="1.3" /><path d="M3 6H7V10H3ZM13 6H15V10H13Z" fill="#fff" /></svg>
          <svg width="16" height="16" viewBox="0 0 16 16"><path d="M3 12C-1 12 1 7 4 8C4 3 11 3 12 7C16 7 16 12 13 12Z" fill="#b99a95" /><path d="M2 2L15 14" stroke="#fff" strokeWidth="1.3" /></svg>
          <svg width="16" height="16" viewBox="0 0 16 16"><path d="M0 0H16V12H11L8 16V12H0Z" fill="#fff" /><path d="M3 3.500H13M3 6H13M3 8.500H9" stroke="#672d24" /></svg>
        </div>
        <div className="ml-auto flex w-[66px] flex-col items-center justify-center text-[11px] leading-[22px] whitespace-nowrap">
          <span>16:08</span>
          <span>16/10/2023</span>
        </div>
        <span className="ml-2 w-[5px] border-l border-[#8b6258]" />
      </div>
    </footer>
  );
}

export default function App() {
  return (
    <div className="relative flex h-screen flex-col overflow-hidden bg-white font-['Noto_Sans',sans-serif]">
      <header className="flex h-6 shrink-0 items-center text-[11px] text-[#222]">
        <svg width="15" height="15" viewBox="0 0 24 24" className="ml-[3px]"><path d="M0 0H24V24H0Z" fill="#eee" /><TableauMark /></svg>
        <h1 className="ml-[5px]">Tableau - Story 1 - Tableau licence expires in 5 days</h1>
        <div className="mr-5 ml-auto flex items-center gap-9">
          <button aria-label="Minimize"><svg width="10" height="10" viewBox="0 0 10 10" className="block"><path d="M0 4.500H10" stroke="#000" /></svg></button>
          <button aria-label="Restore"><svg width="10" height="10" viewBox="0 0 10 10" className="block"><path d="M0.500 2.500H7.500V9.500H0.500ZM2.500 2V0.500H9.500V7.500H8" fill="none" stroke="#000" /></svg></button>
          <button aria-label="Close"><svg width="10" height="10" viewBox="0 0 10 10" className="block"><path d="M0 0L10 10M10 0L0 10" stroke="#000" strokeWidth="1.1" /></svg></button>
        </div>
      </header>
      <nav className="flex h-[19px] shrink-0 items-center gap-[17px] pl-2 text-[11px] text-black">
        {["File", "Data", "Worksheet", "Dashboard", "Story", "Analysis", "Map", "Format", "Server", "Window", "Help"].map((m) => (
          <button key={m}>{m}</button>
        ))}
      </nav>
      <Toolbar />
      <div className="flex min-h-0 flex-1">
        <Sidebar />
        <Canvas />
      </div>
      <SheetTabs />
      <StatusBar />
      <Taskbar />
      <div className="pointer-events-none absolute right-[57px] bottom-[94px] text-[#8c8c8c]/60">
        <p className="text-[19px] leading-6">Activate Windows</p>
        <p className="text-sm leading-5">Go to Settings to activate Windows.</p>
      </div>
    </div>
  );
}
